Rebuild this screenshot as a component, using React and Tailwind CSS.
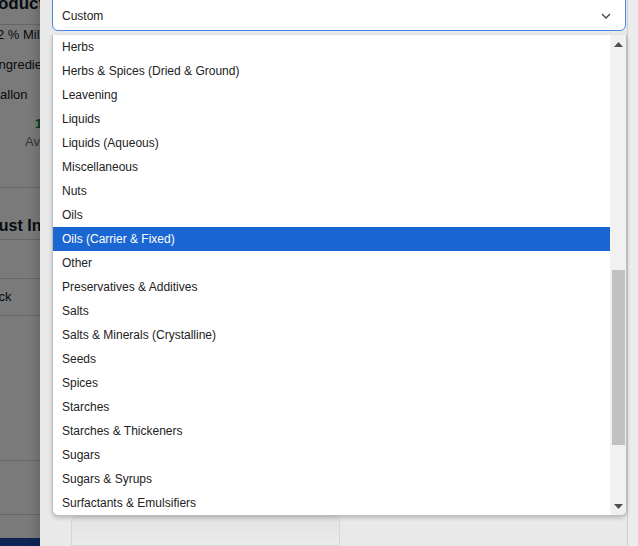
import React from "react";

const categories = [
  "Herbs",
  "Herbs & Spices (Dried & Ground)",
  "Leavening",
  "Liquids",
  "Liquids (Aqueous)",
  "Miscellaneous",
  "Nuts",
  "Oils",
  "Oils (Carrier & Fixed)",
  "Other",
  "Preservatives & Additives",
  "Salts",
  "Salts & Minerals (Crystalline)",
  "Seeds",
  "Spices",
  "Starches",
  "Starches & Thickeners",
  "Sugars",
  "Sugars & Syrups",
  "Surfactants & Emulsifiers",
];

const BackgroundPage = () => (
  <div className="absolute inset-0 bg-white text-[13px] text-gray-900 overflow-hidden">
    <div className="h-[25px] border-b border-gray-300 -ml-[20px] whitespace-nowrap font-bold text-[17px] leading-[8px]">
      Product
    </div>
    <div className="h-[20px] flex items-center -ml-[3px] whitespace-nowrap">2 % Milk</div>
    <div className="h-[40px] flex items-center -ml-[5px] whitespace-nowrap">Ingredients</div>
    <div className="h-[20px] flex items-center -ml-[10px] whitespace-nowrap">Gallon</div>
    <div className="h-[13px]" />
    <div className="h-[12px] flex items-center pl-[35px] font-bold text-green-700">1</div>
    <div className="h-[24px] flex items-center pl-[25px] text-gray-500">Available</div>
    <div className="h-[34px] border-b border-gray-300" />
    <div className="h-[51px] flex items-end pb-[1px] -ml-[27px] whitespace-nowrap font-bold text-[16px]">
      Adjust Inventory
    </div>
    <div className="h-[39px] border-t border-gray-300" />
    <div className="h-[37px] border-t border-gray-300 flex items-center -ml-[21px] whitespace-nowrap">
      Stock
    </div>
    <div className="h-[145px] border-t border-gray-300" />
    <div className="h-[54px] border-t border-gray-300" />
    <div className="h-[24px] border-t border-gray-300" />
    <div className="h-[8px] bg-[#1a4fb0]" />
  </div>
);

const ScrollArrow = ({ up }) => (
  <svg width="9" height="5" viewBox="0 0 9 5">
    <path d={up ? "M0 5 L4.5 0 L9 5 Z" : "M0 0 L4.5 5 L9 0 Z"} fill="#505050" />
  </svg>
);

export default function App() {
  const selected = "Oils (Carrier & Fixed)";

  return (
    <div
      className="relative w-[638px] h-[546px] overflow-hidden bg-white"
      style={{ fontFamily: '"Liberation Sans", Arial, sans-serif' }}
    >
      <BackgroundPage />
      <div className="absolute inset-0 bg-black/[0.52]" />

      {/* modal panel */}
      <div className="absolute left-[40px] top-0 bottom-0 right-0 bg-[#e9e9e9] shadow-[-4px_0_8px_rgba(0,0,0,0.15)] flex">
        <div className="flex-1 flex flex-col pl-[12px] pr-[1px]">
          <div className="h-[35px] -mt-[4px] bg-white border border-[#4a86e8] rounded-b-[6px] flex items-center justify-between pl-[9px] pr-[14px] pt-[4px] text-[12px] text-[#222]">
            <span>Custom</span>
            <svg width="10" height="6" viewBox="0 0 10 6">
              <path d="M1 1 L5 5 L9 1" fill="none" stroke="#444" strokeWidth="1.3" />
            </svg>
          </div>
          <div className="h-[485px]" />
          <div className="ml-[19px] w-[269px] flex-1 border border-[#d6d6d6] rounded-t-[6px] bg-gradient-to-b from-[#e2e2e2] to-[#ebebeb]" />
        </div>
        <div className="w-[11px] border-l border-[#cfcfcf] bg-[#ececec]" />
      </div>

      {/* dropdown list */}
      <div className="absolute left-[52px] top-[35px] w-[575px] h-[481px] bg-white rounded-b-[6px] border border-[#bdbdbd] border-t-0 shadow-[0_2px_4px_rgba(0,0,0,0.2)] flex overflow-hidden">
        <ul className="flex-1 text-[12px] text-[#222]">
          {categories.map((c) => (
            <li
              key={c}
              className={
                c === selected
                  ? "h-[24px] flex items-center pl-[9px] bg-[#1a66d2] text-white"
                  : "h-[24px] flex items-center pl-[9px]"
              }
            >
              {c}
            </li>
          ))}
        </ul>
        <div className="w-[16px] bg-[#f1f1f1] flex flex-col items-center">
          <div className="h-[18px] flex items-center">
            <ScrollArrow up />
          </div>
          <div className="mt-[217px] w-[13px] h-[175px] bg-[#c1c1c1]" />
          <div className="flex-1" />
          <div className="h-[18px] flex items-center">
            <ScrollArrow />
          </div>
        </div>
      </div>
    </div>
  );
}
